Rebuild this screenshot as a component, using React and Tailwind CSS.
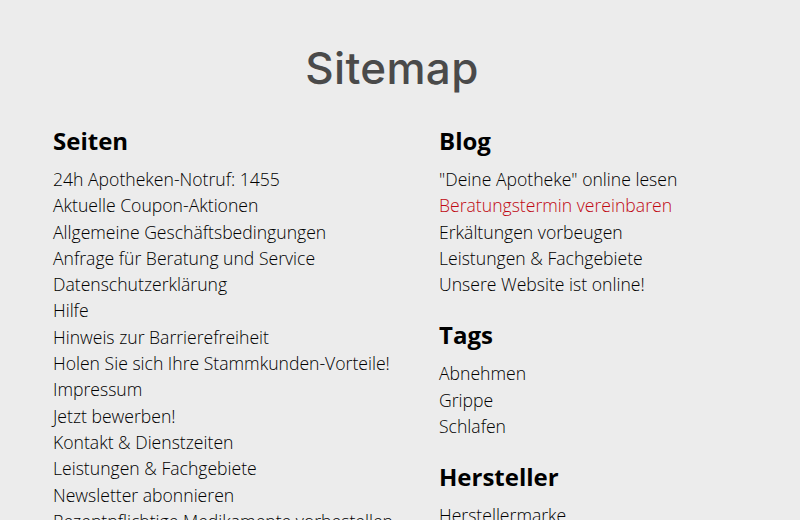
export default function App() {
  const seiten = [
    "24h Apotheken-Notruf: 1455",
    "Aktuelle Coupon-Aktionen",
    "Allgemeine Geschäftsbedingungen",
    "Anfrage für Beratung und Service",
    "Datenschutzerklärung",
    "Hilfe",
    "Hinweis zur Barrierefreiheit",
    "Holen Sie sich Ihre Stammkunden-Vorteile!",
    "Impressum",
    "Jetzt bewerben!",
    "Kontakt & Dienstzeiten",
    "Leistungen & Fachgebiete",
    "Newsletter abonnieren",
    "Rezeptpflichtige Medikamente vorbestellen",
  ];
  const blog = [
    '"Deine Apotheke" online lesen',
    "Beratungstermin vereinbaren",
    "Erkältungen vorbeugen",
    "Leistungen & Fachgebiete",
    "Unsere Website ist online!",
  ];
  const tags = ["Abnehmen", "Grippe", "Schlafen"];
  const hersteller = ["Herstellermarke"];

  const Section = ({ title, items, red, className = "" }) => (
    <div className={className}>
      <h2 className="text-[24px] font-bold leading-[30px] text-black mb-[10px]">{title}</h2>
      <ul>
        {items.map((t) => (
          <li
            key={t}
            className={
              "text-[17.6px] font-light leading-[26.3px] whitespace-nowrap " +
              (t === red ? "text-[#c00812]" : "text-black")
            }
          >
            {t}
          </li>
        ))}
      </ul>
    </div>
  );

  return (
    <div
      className="w-[800px] h-[520px] overflow-hidden bg-[#ececec]"
      style={{ fontFamily: '"Open Sans", "Noto Sans", sans-serif' }}
    >
      <h1
        className="text-center text-[44px] font-medium text-[#4a4a4a] pt-[40px] leading-[56px] pr-[16px] tracking-[0.3px]"
        style={{ fontFamily: 'Inter, "Lato", sans-serif' }}
      >
        Sitemap
      </h1>
      <div className="grid grid-cols-[386px_1fr] pl-[53px] pt-[30px]">
        <Section title="Seiten" items={seiten} />
        <div>
          <Section title="Blog" items={blog} red="Beratungstermin vereinbaren" />
          <Section title="Tags" items={tags} className="mt-[23px]" />
          <Section title="Hersteller" items={hersteller} className="mt-[23px]" />
        </div>
      </div>
    </div>
  );
}
